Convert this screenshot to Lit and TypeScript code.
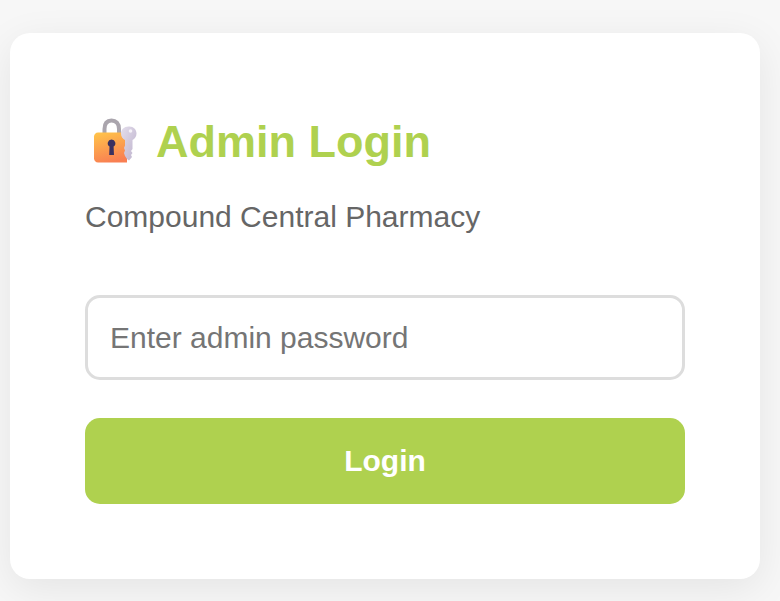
import { LitElement, html, css } from "lit";
import { customElement } from "lit/decorators.js";

@customElement("app-root")
export class AppRoot extends LitElement {
  static styles = css`
    :host {
      display: block;
      height: 601px;
      overflow: hidden;
      background: #f7f7f7;
      font-family: "Liberation Sans", Arial, sans-serif;
    }
    .page {
      padding: 33px 20px 0 10px;
    }
    .card {
      box-sizing: border-box;
      height: 546px;
      background: #fff;
      border-radius: 20px;
      padding: 75px;
      box-shadow: 0 10px 40px rgba(0, 0, 0, 0.08);
    }
    h1 {
      margin: 1px 0 0;
      display: flex;
      align-items: center;
      gap: 16px;
      height: 66px;
      padding-left: 7px;
      font-size: 45px;
      font-weight: 700;
      color: #afd14f;
    }
    .lock {
      width: 48px;
      height: 50px;
      flex: none;
    }
    .sub {
      margin: 24px 0 0;
      font-size: 30px;
      line-height: 35px;
      color: #666;
    }
    input {
      display: block;
      box-sizing: border-box;
      width: 100%;
      height: 85px;
      margin-top: 61px;
      padding: 0 22px;
      border: 3px solid #ddd;
      border-radius: 15px;
      background: #fff;
      font: 30px "Liberation Sans", Arial, sans-serif;
      outline: none;
    }
    input::placeholder {
      color: #757575;
      opacity: 1;
    }
    button {
      display: block;
      width: 100%;
      height: 86px;
      margin-top: 38px;
      border: none;
      border-radius: 15px;
      background: #afd14f;
      color: #fff;
      font: 700 30px "Liberation Sans", Arial, sans-serif;
    }
  `;

  render() {
    return html`
      <div class="page">
        <div class="card">
          <h1>
            <svg class="lock" viewBox="0 0 48 50" aria-hidden="true">
              <defs>
                <linearGradient id="body" x1="0.2" y1="0" x2="0.5" y2="1">
                  <stop offset="0" stop-color="#ffc24a" />
                  <stop offset="1" stop-color="#f97f52" />
                </linearGradient>
                <linearGradient id="key" x1="0" y1="0" x2="1" y2="1">
                  <stop offset="0" stop-color="#e4deec" />
                  <stop offset="1" stop-color="#bdb2cc" />
                </linearGradient>
              </defs>
              <path d="M12.500 18V12C12.500 6.500 15 3.500 19.500 3.500S27 6.500 27 12V18" fill="none" stroke="#aaa5ad" stroke-width="4" />
              <path d="M6 15.500H32L35 19V45.500H6C3.800 45.500 2 43.700 2 41.500V19.500C2 17.300 3.800 15.500 6 15.500z" fill="url(#body)" />
              <path d="M37.500 9.500c4 0 7 3.200 7 7 0 3-1.800 5.500-4 6.500V32l-1.500 2 1.500 2-1.500 2 1 2-3 3.500-2-1.500-2-3-1-3 1-2.500-1-2.500 1-2.500V23c-2.300-1-4-3.500-4-6.500 0-3.800 3.100-7 7.500-7z" fill="url(#key)" />
              <circle cx="38.500" cy="14" r="1.800" fill="#f5f2f8" />
              <path d="M19.500 22.500a3.800 3.800 0 0 1 2.100 7L22 38h-4.800l.3-8.500a3.800 3.800 0 0 1 2-7z" fill="#3a3160" />
            </svg>
            <span>Admin Login</span>
          </h1>
          <p class="sub">Compound Central Pharmacy</p>
          <input type="password" placeholder="Enter admin password" />
          <button type="button">Login</button>
        </div>
      </div>
    `;
  }
}
